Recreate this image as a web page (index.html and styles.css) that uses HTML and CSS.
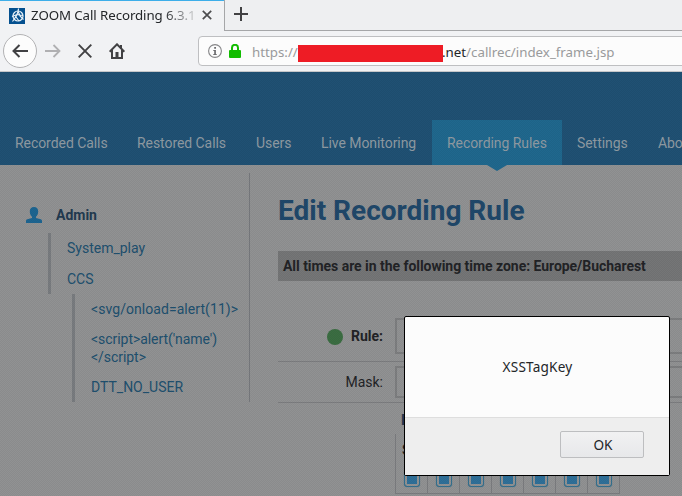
FILE: index.html
```html
<!DOCTYPE html>
<html lang="en">
<head>
<meta charset="utf-8">
<title>ZOOM Call Recording</title>
<link rel="stylesheet" href="styles.css">
</head>
<body>
<div class="window">
  <div class="tabbar">
    <div class="tab">
      <svg class="favicon" width="16" height="16" viewBox="0 0 16 16"><path fill="#04508f" d="M0 0h16v16H0z"/><g fill="none" stroke="#e8f1f8" stroke-width="1.2"><circle cx="9" cy="8" r="5"/><path d="M9.500 0.500C9.500 5 7 9 3.500 13.500M9 3l2 5 3.500 3.500M3 8.500l5-2 6 1M7 9l3 4"/></g></svg>
      <span class="tab-title">ZOOM Call Recording 6.3.1</span>
      <svg class="tab-close" width="10" height="10" viewBox="0 0 10 10"><path d="M.8.8l8.400 8.400M9.200.8L.8 9.200" stroke="#4c4c4e" stroke-width="1.700"/></svg>
    </div>
    <div class="newtab"><svg width="14" height="14" viewBox="0 0 14 14"><path d="M7 0v14M0 7h14" stroke="#414143" stroke-width="2"/></svg></div>
  </div>
  <div class="toolbar">
    <div class="back"><svg width="16" height="14" viewBox="0 0 16 14"><path d="M16 7H1.500M7.500 1l-6 6 6 6" fill="none" stroke="#414143" stroke-width="2"/></svg></div>
    <svg class="forward" width="16" height="14" viewBox="0 0 16 14"><path d="M0 7h14.500M8.500 1l6 6-6 6" fill="none" stroke="#b0b0b2" stroke-width="1.800"/></svg>
    <svg class="stop" width="14" height="14" viewBox="0 0 14 14"><path d="M.7.7l12.600 12.600M13.300.7L.7 13.300" stroke="#414143" stroke-width="1.900"/></svg>
    <svg class="home" width="16" height="16" viewBox="0 0 16 16"><path d="M.6 8.700L8 1.300l7.400 7.400M3 7v8h10V7" fill="none" stroke="#414143" stroke-width="2"/><path fill="#414143" d="M11 2h2v4h-2zM6.500 9h3v6h-3z"/></svg>
    <div class="urlbar">
      <svg class="info" width="14" height="14" viewBox="0 0 14 14"><circle cx="7" cy="7" r="6.400" fill="none" stroke="#858587" stroke-width="1.100"/><path fill="#6c6c6e" d="M6.200 3h1.800v1.700H6.200zM5.300 6h2.600v4h.8v1H5.300v-1h.9V7h-.9z"/></svg>
      <svg class="lock" width="12" height="14" viewBox="0 0 12 14"><path d="M3 7V3.800a3 3 0 0 1 6 0V7" fill="none" stroke="#12bc00" stroke-width="2"/><rect y="6" width="12" height="8" rx="1" fill="#12bc00"/></svg>
      <span class="scheme">https://</span><span class="redacted"></span><span class="domain">.net</span><span class="path">/callrec/index_frame.jsp</span>
    </div>
  </div>

  <div class="page">
    <nav class="nav">
      <a class="calls">Recorded Calls</a><a class="restored">Restored Calls</a><a class="users">Users</a><a class="live">Live Monitoring</a><a class="active">Recording Rules</a><a class="settings">Settings</a><a>About</a>
    </nav>
    <div class="content">
      <aside class="sidebar">
        <div class="user"><svg width="16" height="16" viewBox="0 0 16 16"><path fill="#1d6591" d="M8 0c2.700 0 4.200 1.700 4.200 4.200 0 2.300-.8 4.500-2.200 5.600v1.200l4.700 1.300c1 .3 1.300 1 1.300 2V16H0v-1.700c0-1 .3-1.700 1.300-2L6 11V9.800C4.600 8.700 3.800 6.500 3.800 4.200 3.800 1.700 5.300 0 8 0z"/></svg><b>Admin</b></div>
        <div class="tree"><a>System_play</a><a>CCS</a></div>
        <div class="tree subtree"><a class="svgtag">&lt;svg/onload=alert(11)&gt;</a><a class="two">&lt;script&gt;alert('name')<br>&lt;/script&gt;</a><a>DTT_NO_USER</a></div>
      </aside>
      <main class="main">
        <h1>Edit Recording Rule</h1>
        <div class="notice">All times are in the following time zone: Europe/Bucharest</div>
        <div class="row rule"><label><i class="dot"></i><b>Rule:</b></label><span class="input"></span></div>
        <div class="row mask"><label>Mask:</label><span class="input"></span></div>
        <div class="schedule">
          <div class="caption">Enabled</div>
          <div class="days">
            <div class="day">S<i class="check"></i></div><div class="day"><i class="check"></i></div><div class="day"><i class="check"></i></div><div class="day"><i class="check"></i></div><div class="day"><i class="check"></i></div><div class="day"><i class="check"></i></div><div class="day"><i class="check"></i></div>
          </div>
        </div>
      </main>
    </div>
    <div class="texture"></div>
  </div>

  <div class="dialog">
    <div class="message">XSSTagKey</div>
    <div class="footer"><button>OK</button></div>
  </div>
</div>
</body>
</html>
```
FILE: styles.css
```css
* { box-sizing: border-box; }
body { margin: 0; }
svg { display: block; flex: none; }
.window {
  position: relative;
  width: 682px;
  height: 496px;
  overflow: hidden;
  display: flex;
  flex-direction: column;
  font-family: Roboto, sans-serif;
  font-size: 14px;
}

/* Browser chrome */
.tabbar { display: flex; height: 31px; flex: none; background: #eeeff1; font-family: "Noto Sans", sans-serif; }
.tab {
  width: 224px;
  display: flex;
  align-items: center;
  padding-left: 9px;
  background: #f1f2f4;
  border-top: 1px solid #3daee9;
}
.tab-title {
  width: 165px;
  margin: -2px 0 0 6px;
  overflow: hidden;
  white-space: nowrap;
  font-size: 13.3px;
  letter-spacing: -.09px;
  color: #232629;
  -webkit-mask-image: linear-gradient(to right, #000 132px, transparent 170px);
  mask-image: linear-gradient(to right, #000 132px, transparent 170px);
}
.tab-close { margin: -2px 0 0 6px; }
.newtab { flex: 1; padding: 7px 0 0 9px; border-left: 1px solid #a5a6a8; border-bottom: 1px solid #a5a6a8; }
.toolbar {
  display: flex;
  align-items: center;
  height: 41px;
  flex: none;
  padding-left: 3px;
  background: #f1f2f4;
  border-bottom: 1px solid #c6c7c9;
}
.back {
  width: 34px;
  height: 34px;
  border: 1px solid #b2b2b4;
  border-radius: 50%;
  background: #fcfcfc;
  display: flex;
  align-items: center;
  justify-content: center;
}
.forward { margin-left: 8px; }
.stop { margin-left: 17px; }
.home { margin-left: 17px; }
.urlbar {
  flex: 1;
  height: 30px;
  margin: 0 -4px 0 73px;
  padding-left: 9px;
  display: flex;
  align-items: center;
  border: 1px solid #bebfc1;
  border-radius: 4px;
  background: #fcfcfc;
  font-family: "Noto Sans", sans-serif;
  font-size: 13.3px;
  color: #999a9b;
  white-space: nowrap;
}
.lock { margin-left: 7px; }
.scheme { width: 46px; margin-left: 11px; }
.redacted { width: 145px; height: 17px; margin-top: 4px; background: #ee1c25; }
.domain { color: #232629; margin-left: -1px; }
.scheme, .domain, .path { padding-top: 1px; }

/* Dimmed page */
.page { position: relative; flex: 1; display: flex; flex-direction: column; min-height: 0; background: #919293; }
.texture {
  position: absolute;
  inset: 0;
  background-image: conic-gradient(rgba(0,0,0,.05) 25%, transparent 0 50%, rgba(0,0,0,.05) 0 75%, transparent 0);
  background-size: 2px 2px;
}
.nav { height: 93px; flex: none; padding-top: 48px; display: flex; background: #205174; color: #8f9ba3; white-space: nowrap; letter-spacing: -.06px; }
.nav a { flex: none; height: 45px; padding: 0 15px; line-height: 46px; }
.nav .calls { width: 122px; }
.nav .restored { width: 119px; }
.nav .users { width: 65px; }
.nav .live { width: 126px; }
.nav .settings { width: 81px; }
.nav .active { position: relative; width: 130px; background: #20688e; }
.nav .active::after {
  content: "";
  position: absolute;
  left: 55px;
  top: 45px;
  border: 10px solid transparent;
  border-top: 6px solid #20688e;
  border-bottom: 0;
}
.content { display: flex; color: #222326; }
.sidebar { width: 250px; height: 229px; margin-top: 8px; border-right: 1px solid #77797d; color: #20506f; flex: none; }
.user { display: flex; align-items: flex-start; gap: 14px; padding: 33px 0 0 26px; height: 60px; }
.user svg { margin-top: 1px; }
.user b { color: #223a50; line-height: 18px; }
.tree { margin-left: 48px; border-left: 3px solid #797c80; padding-left: 16px; display: flex; flex-direction: column; }
.tree a { height: 30.5px; line-height: 30px; white-space: nowrap; }
.subtree { margin-left: 72px; height: 108px; }
.subtree .svgtag { letter-spacing: .06px; }
.subtree .two { height: 48px; line-height: 18px; padding-top: 6px; letter-spacing: -.05px; }
.main { flex: 1; min-width: 0; padding: 28px 0 0 28px; }
h1 { margin: 0; font-size: 28px; line-height: 36px; color: #20486a; }
.notice { height: 30px; margin-top: 22px; padding-left: 5px; line-height: 30px; font-weight: bold; letter-spacing: -.04px; background: #757677; white-space: nowrap; }
.row { display: flex; align-items: center; border-bottom: 1px solid #7c7d80; }
.row label { width: 105px; display: flex; justify-content: flex-end; align-items: center; gap: 8px; }
.row .input { flex: 1; margin: 0 -4px 0 12px; border: 2px solid #7d7e80; }
.rule { margin-top: 30px; height: 51px; }
.rule .input { height: 36px; }
.mask { height: 41px; }
.mask .input { height: 32px; }
.dot { width: 16px; height: 16px; margin-top: 2px; border-radius: 50%; background: #3b6e42; }
.schedule { margin-left: 117px; width: 225px; font-weight: bold; font-size: 15px; }
.caption { height: 31px; padding: 8px 0 0 6px; line-height: 18px; color: #24384f; }
.days { display: flex; height: 60px; border-left: 1px solid #7b7c7f; border-bottom: 1px solid #7b7c7f; }
.day { width: 32px; border-right: 1px solid #7b7c7f; padding: 7px 0 0 6px; line-height: 18px; display: flex; flex-direction: column; }
.check { width: 16px; height: 16px; margin: auto 0 6px 2px; padding: 2px; border: 1px solid #33708f; border-radius: 3px; background: #2f7099 content-box; box-shadow: 0 0 1px #4b7488; }

/* Alert */
.dialog {
  position: absolute;
  left: 404px;
  top: 316px;
  width: 266px;
  height: 160px;
  display: flex;
  flex-direction: column;
  border: 1px solid #000;
  border-radius: 2px;
  background: #fcfcfc;
  font-family: "Noto Sans", sans-serif;
  font-size: 13.6px;
  color: #232629;
}
.message { height: 100px; line-height: 99px; text-align: center; padding-left: 1px; letter-spacing: .2px; }
.footer { flex: 1; border-top: 1px solid #dedede; background: #eee; display: flex; justify-content: flex-end; padding: 13px 25px 0 0; }
button {
  width: 84px;
  height: 27px;
  padding: 0 0 1px 2px;
  border: 1px solid #bdbec0;
  border-radius: 2px;
  background: linear-gradient(#f1f1f2, #e7e8ea);
  font: inherit;
  color: inherit;
}
```
